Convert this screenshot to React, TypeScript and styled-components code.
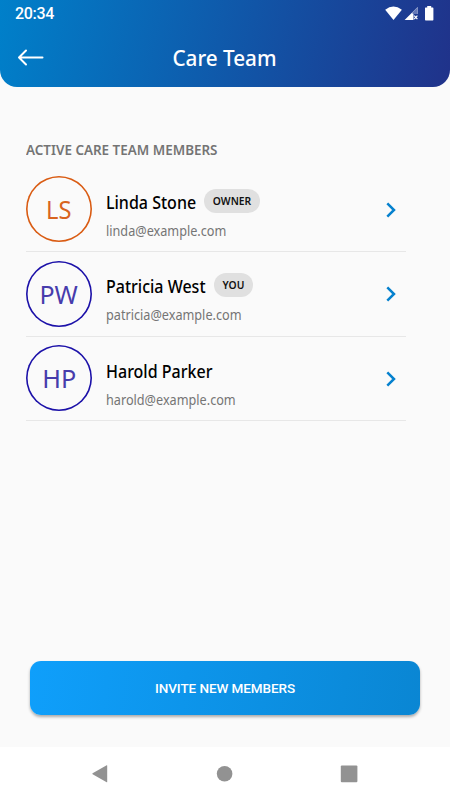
import React from "react";
import styled, { createGlobalStyle } from "styled-components";

const GlobalStyle = createGlobalStyle`
  * { box-sizing: border-box; }
  body { margin: 0; background: #fafafa; }
  button { border: 0; padding: 0; background: none; font: inherit; color: inherit; }
  svg { display: block; }
`;

const Screen = styled.div`
  width: 450px;
  height: 800px;
  display: flex;
  flex-direction: column;
  overflow: hidden;
  background: #fafafa;
  font-family: "Noto Sans", sans-serif;
`;

const Header = styled.header`
  height: 87px;
  flex: none;
  border-radius: 0 0 17px 17px;
  background: linear-gradient(101deg, #0080ca 0%, #1155a7 55%, #20328a 100%);
  color: #fff;
`;

const StatusBar = styled.div`
  height: 28px;
  padding: 0 14px 0 15px;
  display: flex;
  align-items: center;
  justify-content: space-between;
`;

const Clock = styled.span`
  font: 500 16px/28px Roboto, sans-serif;
  letter-spacing: -0.3px;
`;

const TitleBar = styled.div`
  height: 59px;
  padding: 0 18px 0 17px;
  display: grid;
  grid-template-columns: 28px 1fr 28px;
  align-items: center;
`;

const Title = styled.h1`
  margin: 0;
  text-align: center;
  font-size: 21px;
  line-height: 30px;
  font-weight: 500;
  transform: scaleX(0.985);
`;

const Main = styled.main`
  flex: 1;
  display: flex;
  flex-direction: column;
  padding: 52px 30px 32px 26px;
`;

const SectionTitle = styled.h2`
  margin: 0;
  height: 28.4px;
  font-size: 14px;
  line-height: 22px;
  font-weight: 600;
  color: #747474;
  white-space: nowrap;
  transform: scaleX(0.959);
  transform-origin: left center;
`;

const MemberList = styled.ul`
  list-style: none;
  margin: 0;
  padding: 0;
  width: 380px;
`;

const MemberRow = styled.li`
  height: 84.6px;
  display: flex;
  align-items: center;
  border-bottom: 1px solid #e7e7e7;
`;

const Avatar = styled.div<{ $ring: string; $ink: string }>`
  width: 66px;
  height: 66px;
  flex: none;
  box-shadow: inset 0 0 0 1.6px ${(p) => p.$ring};
  border-radius: 50%;
  display: flex;
  align-items: center;
  justify-content: center;
  font-size: 25.5px;
  line-height: 30px;
  color: ${(p) => p.$ink};
`;

const Initials = styled.span<{ $scale: number }>`
  transform: scaleX(${(p) => p.$scale});
`;

const Details = styled.div`
  flex: 1;
  padding: 12px 0 0 14px;
`;

const NameLine = styled.div`
  display: flex;
  align-items: center;
  gap: 8.5px;
  height: 24px;
`;

const Name = styled.span<{ $width: number }>`
  width: ${(p) => p.$width}px;
  font-size: 17.5px;
  line-height: 24px;
  font-weight: 500;
  color: #000;
  white-space: nowrap;
  transform: scaleX(0.915);
  transform-origin: left center;
`;

const Badge = styled.span<{ $width: number }>`
  width: ${(p) => p.$width}px;
  height: 24px;
  margin-top: -2px;
  border-radius: 12px;
  background: #e0e0e0;
  color: #111;
  font-size: 10.3px;
  line-height: 25px;
  font-weight: 600;
  text-align: center;
`;

const Email = styled.div`
  margin-top: 7px;
  font-size: 13.5px;
  line-height: 20px;
  color: #757575;
  transform: scaleX(0.938);
  transform-origin: left center;
`;

const RowAction = styled.button`
  width: 31px;
  height: 32px;
  padding-top: 1px;
  display: flex;
  align-items: center;
  justify-content: center;
`;

const InviteButton = styled.button`
  margin: auto 0 0 4px;
  width: 390px;
  height: 54px;
  flex: none;
  border-radius: 11px;
  background: linear-gradient(98deg, #0f9ffb, #0a86d3);
  box-shadow: 0 2px 3px rgba(0, 0, 0, 0.32);
  color: #fff;
  font: 500 13.5px/54px Roboto, sans-serif;
  letter-spacing: -0.08px;
  text-align: center;
`;

const NavBar = styled.nav`
  height: 53px;
  flex: none;
  padding: 0 39px 0 38px;
  background: #fff;
  display: grid;
  grid-template-columns: repeat(3, 1fr);
  align-items: center;
  justify-items: center;
`;

const members = [
  { name: "Linda Stone", email: "linda@example.com", initials: "LS", ring: "#d95b12", ink: "#d8641f", badge: "OWNER", nameWidth: 89.5, badgeWidth: 56, initialsScale: 0.93 },
  { name: "Patricia West", email: "patricia@example.com", initials: "PW", ring: "#1b10a8", ink: "#473cac", badge: "YOU", nameWidth: 99.5, badgeWidth: 39, initialsScale: 0.98 },
  { name: "Harold Parker", email: "harold@example.com", initials: "HP", ring: "#1b10a8", ink: "#473cac", badge: "", nameWidth: 106.5, badgeWidth: 0, initialsScale: 0.99 },
];

const StatusIcons = () => (
  <svg width="52" height="18" viewBox="0 0 52 18" fill="#fff" aria-hidden="true">
    <path d="M1.2 4.7Q9.3-1.7 17.9 4.7L9.5 15Z" />
    <path d="M33.7 2V9H29.5V15H20.6Z" />
    <path d="M33.7 2V9H28.6V7.2Z" fill="#6478b7" />
    <path d="M30.2 10.7l3.2 3.5M33.4 10.7l-3.2 3.5" stroke="#fff" strokeWidth="1.2" />
    <path d="M41.5 2.6H43.2V1h4v1.6h1.6q.6 0 .6.6v11.6q0 .7-.7.7h-7q-.7 0-.7-.7V3.2q0-.6.5-.6Z" />
  </svg>
);

const App: React.FC = () => (
  <>
    <GlobalStyle />
    <Screen>
      <Header>
        <StatusBar>
          <Clock>20:34</Clock>
          <StatusIcons />
        </StatusBar>
        <TitleBar>
          <button aria-label="Back">
            <svg width="28" height="20" viewBox="0 0 28 20" fill="none" stroke="#fff" strokeWidth="2" strokeLinecap="round" strokeLinejoin="round">
              <path d="M9 2.5 2 9.5l7 7M2 9.5h23.5" />
            </svg>
          </button>
          <Title>Care Team</Title>
        </TitleBar>
      </Header>
      <Main>
        <SectionTitle>ACTIVE CARE TEAM MEMBERS</SectionTitle>
        <MemberList>
          {members.map((m) => (
            <MemberRow key={m.email}>
              <Avatar $ring={m.ring} $ink={m.ink}>
                <Initials $scale={m.initialsScale}>{m.initials}</Initials>
              </Avatar>
              <Details>
                <NameLine>
                  <Name $width={m.nameWidth}>{m.name}</Name>
                  {m.badge && <Badge $width={m.badgeWidth}>{m.badge}</Badge>}
                </NameLine>
                <Email>{m.email}</Email>
              </Details>
              <RowAction aria-label={`Open ${m.name}`}>
                <svg width="12" height="18" viewBox="0 0 12 18" fill="none" stroke="#0581ce" strokeWidth="2.5">
                  <path d="M2.3 2.3 9 9l-6.7 6.7" />
                </svg>
              </RowAction>
            </MemberRow>
          ))}
        </MemberList>
        <InviteButton>INVITE NEW MEMBERS</InviteButton>
      </Main>
      <NavBar>
        <svg width="18" height="20" viewBox="0 0 18 20" fill="#929292"><path d="M16.2 1.6V18q0 .5-.5.2L1.6 10.3q-.6-.5 0-1L15.7 1.2q.5-.2.5.4Z" /></svg>
        <svg width="18" height="18" viewBox="0 0 18 18" fill="#929292"><circle cx="9.6" cy="8.7" r="7.8" /></svg>
        <svg width="18" height="18" viewBox="0 0 18 18" fill="#929292"><rect x=".8" y=".6" width="16.6" height="16.6" rx="1" /></svg>
      </NavBar>
    </Screen>
  </>
);

export default App;
